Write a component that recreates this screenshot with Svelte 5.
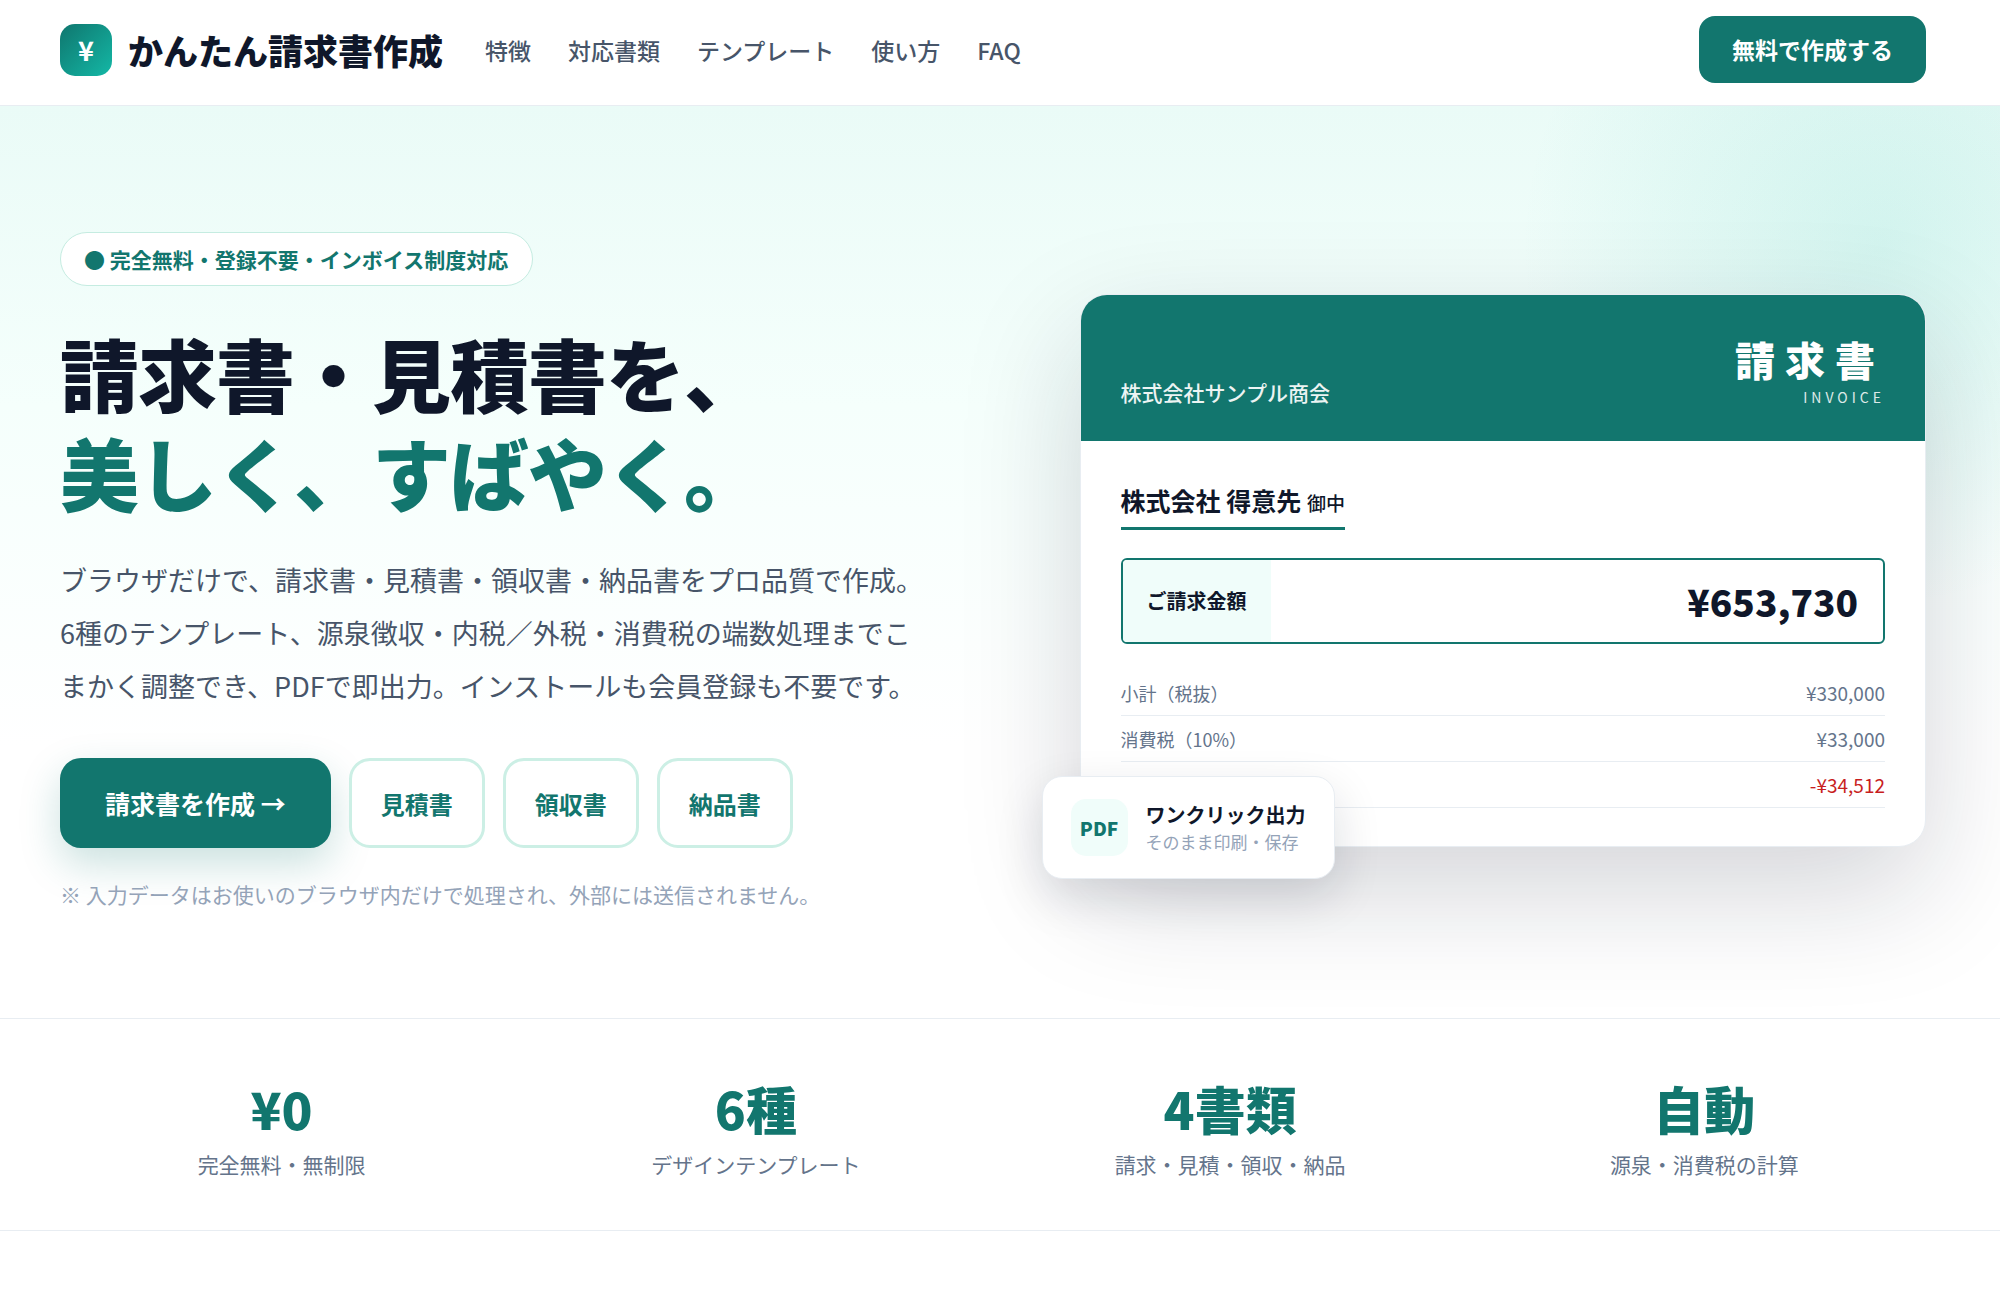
<script>
    const links = ['特徴', '対応書類', 'テンプレート', '使い方', 'FAQ'];
    const documents = ['見積書', '領収書', '納品書'];
    const rows = [
        { label: '小計（税抜）', value: '¥330,000' },
        { label: '消費税（10%）', value: '¥33,000' },
        { label: '源泉徴収税', value: '-¥34,512', minus: true }
    ];
    const stats = [
        { value: '¥0', label: '完全無料・無制限' },
        { value: '6種', label: 'デザインテンプレート' },
        { value: '4書類', label: '請求・見積・領収・納品' },
        { value: '自動', label: '源泉・消費税の計算' }
    ];
</script>

<header class="header">
    <div class="container header-inner">
        <a class="brand" href="#top">
            <span class="brand-mark">¥</span>
            <span class="brand-name">かんたん請求書作成</span>
        </a>
        <nav class="nav">
            {#each links as link}
                <a href="#{link}">{link}</a>
            {/each}
        </nav>
        <button class="header-cta" type="button">無料で作成する</button>
    </div>
</header>

<main id="top">
    <section class="hero">
        <div class="container hero-grid">
            <div class="hero-copy">
                <div class="pill">● 完全無料・登録不要・インボイス制度対応</div>
                <h1>請求書・見積書を、<br><span>美しく、すばやく。</span></h1>
                <p class="lead">ブラウザだけで、請求書・見積書・領収書・納品書をプロ品質で作成。6種のテンプレート、源泉徴収・内税／外税・消費税の端数処理までこまかく調整でき、PDFで即出力。インストールも会員登録も不要です。</p>
                <div class="actions">
                    <button class="primary" type="button">請求書を作成 →</button>
                    {#each documents as name}
                        <button class="secondary" type="button">{name}</button>
                    {/each}
                </div>
                <p class="note">※ 入力データはお使いのブラウザ内だけで処理され、外部には送信されません。</p>
            </div>

            <div class="preview">
                <div class="invoice">
                    <div class="invoice-head">
                        <div class="issuer">株式会社サンプル商会</div>
                        <div class="invoice-title">
                            <div class="title-ja">請求書</div>
                            <div class="title-en">INVOICE</div>
                        </div>
                    </div>
                    <div class="invoice-body">
                        <div class="client">株式会社 得意先 <small>御中</small></div>
                        <div class="total">
                            <span class="total-label">ご請求金額</span>
                            <strong>¥653,730</strong>
                        </div>
                        <table>
                            <tbody>
                                {#each rows as row}
                                    <tr>
                                        <th scope="row">{row.label}</th>
                                        <td class:minus={row.minus}>{row.value}</td>
                                    </tr>
                                {/each}
                            </tbody>
                        </table>
                    </div>
                </div>
                <div class="export">
                    <span class="export-icon">PDF</span>
                    <div>
                        <div class="export-title">ワンクリック出力</div>
                        <div class="export-sub">そのまま印刷・保存</div>
                    </div>
                </div>
            </div>
        </div>
    </section>

    <section class="stats">
        <div class="container stats-grid">
            {#each stats as stat}
                <div class="stat">
                    <div class="stat-value">{stat.value}</div>
                    <div class="stat-label">{stat.label}</div>
                </div>
            {/each}
        </div>
    </section>
</main>

<style>
    :global(body) {
        margin: 0;
        background: #fff;
        color: #0f172a;
        font-family: "Noto Sans CJK JP", sans-serif;
    }
    :global(*) {
        box-sizing: border-box;
    }
    a {
        color: inherit;
        text-decoration: none;
    }
    button {
        font-family: inherit;
        font-weight: 700;
        border: 0;
        cursor: pointer;
    }
    .container {
        padding: 0 74px 0 60px;
    }

    .header {
        border-bottom: 1px solid #e8edf2;
        background: #fff;
    }
    .header-inner {
        display: flex;
        align-items: center;
        padding-top: 16px;
        padding-bottom: 22px;
    }
    .brand {
        display: flex;
        align-items: center;
        gap: 16px;
    }
    .brand-mark {
        display: flex;
        align-items: center;
        justify-content: center;
        width: 52px;
        height: 52px;
        border-radius: 15px;
        background: linear-gradient(135deg, #0f766e, #14b8a6);
        color: #fff;
        font-size: 27px;
        font-weight: 700;
        line-height: 52px;
    }
    .brand-name {
        font-size: 35px;
        font-weight: 900;
        line-height: 54px;
    }
    .nav {
        display: flex;
        gap: 37px;
        margin-left: 42px;
        color: #475569;
        font-size: 23px;
        font-weight: 500;
        line-height: 34px;
    }
    .header-cta {
        margin-left: auto;
        padding: 16px 33px;
        border-radius: 16px;
        background: #12766e;
        color: #fff;
        font-size: 23px;
        line-height: 35px;
    }

    .hero {
        padding: 126px 0 109px;
        background:
            radial-gradient(circle at 94% 140px, rgba(20, 184, 166, 0.13), transparent 360px),
            linear-gradient(180deg, #eafbf7 0, #f5fffc 300px, #fff 640px);
    }
    .hero-grid {
        display: grid;
        grid-template-columns: 105fr 95fr;
        gap: 84px;
        align-items: center;
    }
    .pill {
        display: inline-block;
        padding: 10px 24px 10px 23px;
        border: 1px solid #c5ece1;
        border-radius: 27px;
        background: #fff;
        color: #12766e;
        font-size: 21px;
        font-weight: 700;
        line-height: 32px;
        vertical-align: top;
    }
    h1 {
        margin: 37px 0 32px;
        font-size: 79px;
        font-weight: 900;
        line-height: 99px;
        letter-spacing: -1px;
    }
    h1 span {
        color: #12766e;
    }
    .lead {
        max-width: 872px;
        margin: 0 0 46px;
        color: #475569;
        font-size: 27px;
        line-height: 53px;
    }
    .actions {
        display: flex;
        gap: 18px;
    }
    .primary {
        padding: 27px 45px;
        border-radius: 21px;
        background: #12766e;
        box-shadow: 0 16px 40px rgba(15, 118, 110, 0.22);
        color: #fff;
        font-size: 25px;
        line-height: 36px;
    }
    .secondary {
        padding: 0 29px;
        border: 3px solid #ccefe5;
        border-radius: 21px;
        background: #fff;
        color: #12766e;
        font-size: 24px;
    }
    .note {
        margin: 31px 0 0;
        color: #94a3b8;
        font-size: 21px;
        line-height: 30px;
    }

    .preview {
        position: relative;
    }
    .invoice {
        overflow: hidden;
        border: 1px solid #e8edf2;
        border-radius: 27px;
        background: #fff;
        box-shadow: 0 44px 120px rgba(15, 23, 42, 0.18);
    }
    .invoice-head {
        display: flex;
        align-items: flex-end;
        justify-content: space-between;
        padding: 36px 40px 34px;
        background: #12766e;
        color: #fff;
    }
    .issuer {
        font-size: 21px;
        font-weight: 500;
        line-height: 30px;
        opacity: 0.92;
    }
    .invoice-title {
        text-align: right;
    }
    .title-ja {
        font-size: 40px;
        font-weight: 900;
        line-height: 56px;
        letter-spacing: 10px;
    }
    .title-en {
        font-size: 14px;
        line-height: 20px;
        letter-spacing: 4px;
        opacity: 0.85;
    }
    .invoice-body {
        padding: 40px 40px 38px;
    }
    .client {
        width: fit-content;
        padding-bottom: 8px;
        border-bottom: 3px solid #12766e;
        font-size: 25px;
        font-weight: 700;
        line-height: 38px;
    }
    .client small {
        font-size: 19px;
        font-weight: 500;
        line-height: 20px;
    }
    .total {
        display: flex;
        justify-content: space-between;
        margin: 28px 0 26px;
        border: 2px solid #12766e;
        border-radius: 6px;
        line-height: 82px;
    }
    .total-label {
        padding: 0 24px;
        border-radius: 4px 0 0 4px;
        background: #f0fdfa;
        font-size: 20px;
        font-weight: 700;
    }
    .total strong {
        padding-right: 25px;
        font-size: 37px;
        font-weight: 900;
    }
    table {
        width: 100%;
        border-collapse: collapse;
        color: #64748b;
        font-size: 19px;
        line-height: 28px;
    }
    th,
    td {
        padding: 9px 0 8px;
        border-bottom: 1px solid #e8edf2;
        font-weight: 400;
        text-align: left;
    }
    th {
        font-size: 18px;
    }
    td {
        text-align: right;
    }
    td.minus {
        color: #c81e1e;
    }
    .export {
        position: absolute;
        left: -38px;
        bottom: -32px;
        display: flex;
        align-items: center;
        gap: 18px;
        padding: 22px 28px;
        border: 1px solid #e8edf2;
        border-radius: 20px;
        background: #fff;
        box-shadow: 0 18px 48px rgba(15, 23, 42, 0.14);
    }
    .export-icon {
        width: 57px;
        border-radius: 15px;
        background: #f0fdfa;
        color: #12766e;
        font-size: 19px;
        font-weight: 900;
        line-height: 57px;
        text-align: center;
    }
    .export-title {
        font-size: 20px;
        font-weight: 700;
        line-height: 28px;
    }
    .export-sub {
        color: #94a3b8;
        font-size: 17px;
        line-height: 25px;
    }

    .stats {
        border: solid #e8edf2;
        border-width: 1px 0;
    }
    .stats-grid {
        display: grid;
        grid-template-columns: repeat(4, 1fr);
        gap: 31px;
        padding-top: 52px;
        padding-bottom: 47px;
        text-align: center;
    }
    .stat-value {
        color: #12766e;
        font-size: 51px;
        font-weight: 900;
        line-height: 75px;
    }
    .stat-label {
        color: #64748b;
        font-size: 21px;
        line-height: 37px;
    }
</style>
